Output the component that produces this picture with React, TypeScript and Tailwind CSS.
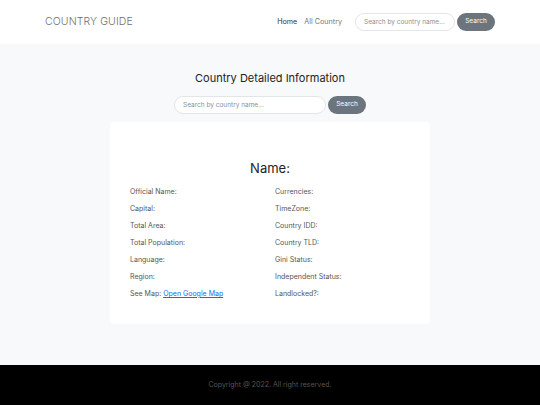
import { useState } from "react";

const leftFields = ["Official Name:", "Capital:", "Total Area:", "Total Population:", "Language:", "Region:"];
const rightFields = ["Currencies:", "TimeZone:", "Country IDD:", "Country TLD:", "Gini Status:", "Independent Status:", "Landlocked?:"];

function SearchBox({ inputClass }: { inputClass: string }) {
  const [q, setQ] = useState("");
  return (
    <div className="flex items-center gap-[2px]">
      <input
        value={q}
        onChange={(e) => setQ(e.target.value)}
        placeholder="Search by country name..."
        className={`${inputClass} h-[18px] rounded-full border border-[#e3e6e9] bg-white px-[8px] text-[6.5px] text-gray-700 placeholder:text-[#8a8f94] outline-none`}
      />
      <button className="h-[18px] w-[38px] rounded-full bg-[#6c757d] text-[6.5px] text-white">Search</button>
    </div>
  );
}

export default function App() {
  return (
    <div className="flex min-h-[405px] flex-col bg-[#f8f9fa] font-['Inter',sans-serif]">
      <header className="flex h-[44px] items-center justify-between bg-white pl-[45px] pr-[45px]">
        <div className="text-[10.5px] font-light tracking-[0.1px] text-[#707070]">COUNTRY GUIDE</div>
        <div className="flex items-center">
          <nav className="mr-[13px] flex gap-[7px] text-[7.2px]">
            <span className="text-[#333]">Home</span>
            <span className="text-[#777]">All Country</span>
          </nav>
          <SearchBox inputClass="w-[100px]" />
        </div>
      </header>

      <main className="flex flex-1 flex-col items-center pt-[26px]">
        <h1 className="text-[11px] text-[#222]">Country Detailed Information</h1>
        <div className="mt-[9px]">
          <SearchBox inputClass="w-[152px]" />
        </div>

        <div className="mb-[40px] mt-[8px] w-[320px] rounded-[4px] bg-white px-[20px] pb-[26px] pt-[37px]">
          <h2 className="text-center text-[13px] text-[#222]">Name:</h2>
          <div className="mt-[9px] grid grid-cols-2 text-[7px] text-[#555]">
            <div className="flex flex-col gap-[8px]">
              {leftFields.map((f) => (
                <div key={f} className="h-[9px] leading-[9px]">{f}</div>
              ))}
              <div className="h-[9px] leading-[9px]">
                See Map: <a href="#" className="text-[#0d6efd] underline">Open Google Map</a>
              </div>
            </div>
            <div className="flex flex-col gap-[8px] pl-[5px]">
              {rightFields.map((f) => (
                <div key={f} className="h-[9px] leading-[9px]">{f}</div>
              ))}
            </div>
          </div>
        </div>
      </main>

      <footer className="flex h-[40px] items-center justify-center bg-black text-[7px] text-[#555]">
        Copyright @ 2022. All right reserved.
      </footer>
    </div>
  );
}
